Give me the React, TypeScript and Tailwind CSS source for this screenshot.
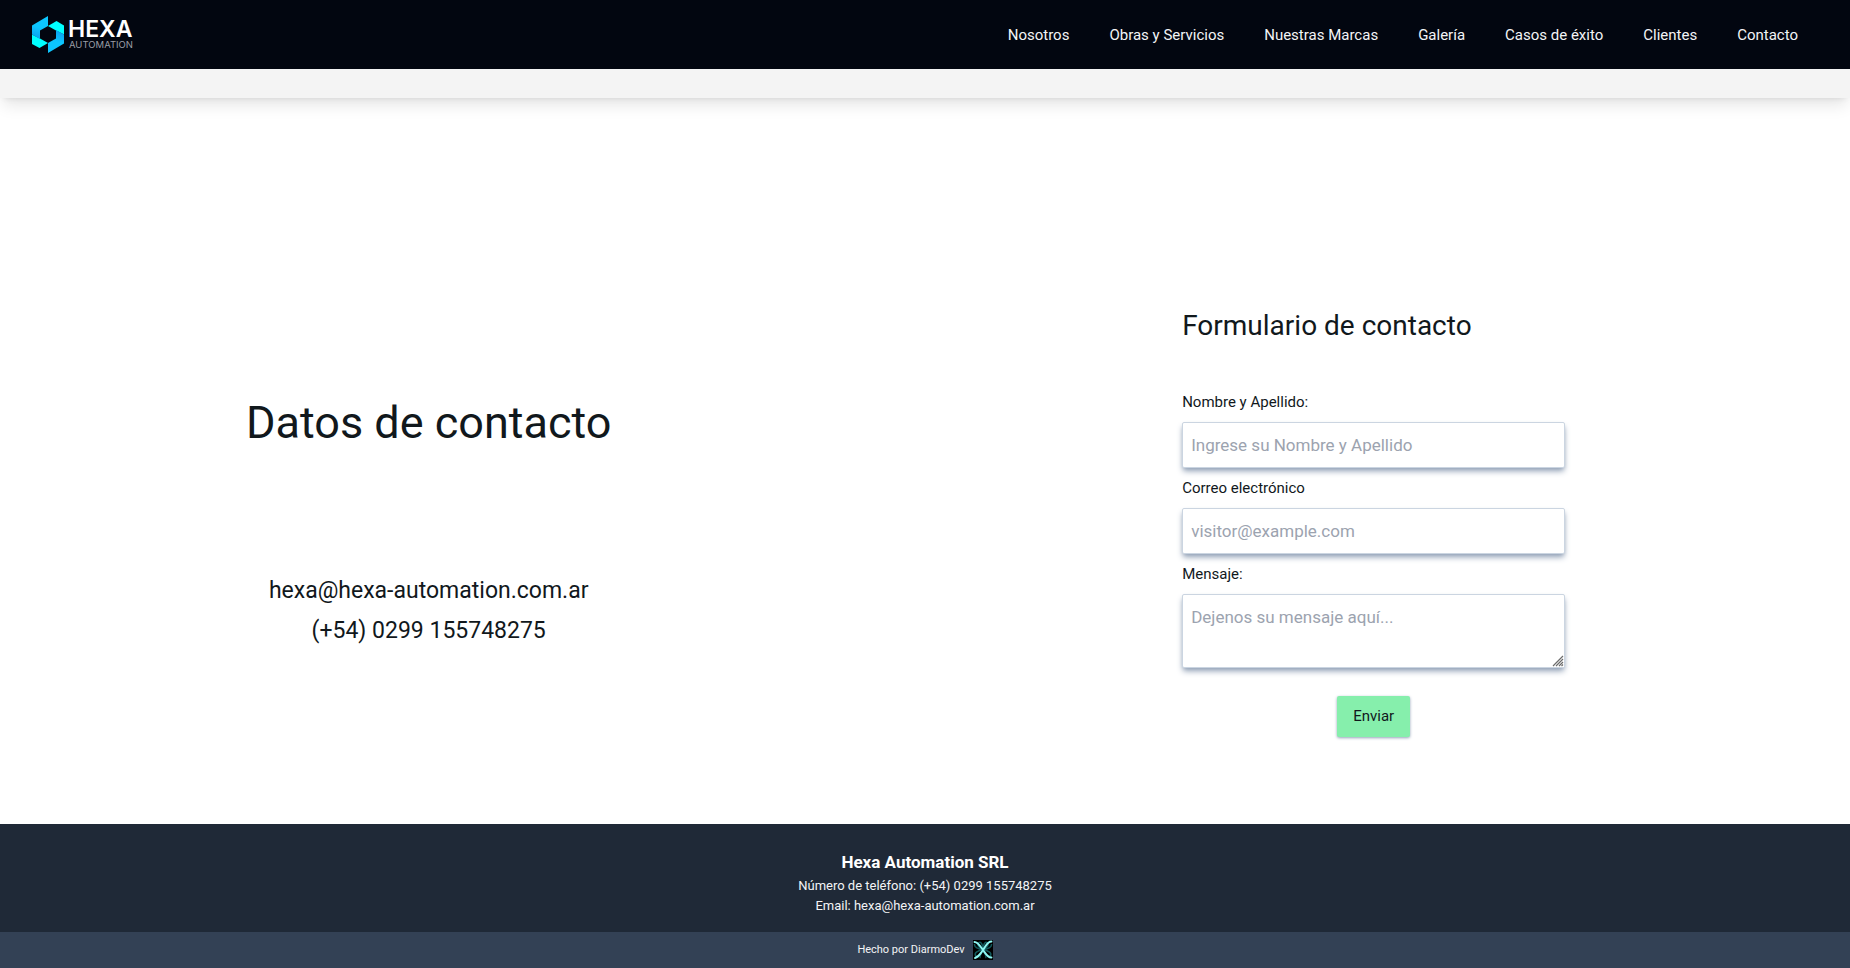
import React from "react";

const links = [
  "Nosotros",
  "Obras y Servicios",
  "Nuestras Marcas",
  "Galería",
  "Casos de éxito",
  "Clientes",
  "Contacto",
];

const labelClass = "block py-2 text-[15px] leading-6";

const fieldClass =
  "block w-full rounded-xs border border-[#cbd5e1] bg-white p-2 text-[17px] leading-7 text-[#11181c] shadow-[0_4px_6px_-1px_#94a3b8,0_2px_4px_-2px_#94a3b8] placeholder:text-[#9ca3af] focus:outline-none";

function Logo() {
  return (
    <a href="#inicio" aria-label="Hexa Automation" className="flex items-center gap-1">
      <svg width="32" height="37" viewBox="0 0 32 37" aria-hidden="true">
        <defs>
          <linearGradient id="fold-a" x1="0.6" y1="0" x2="0.4" y2="1">
            <stop offset="0.5" stopColor="#0cc6ff" />
            <stop offset="1" stopColor="#0a9ff0" />
          </linearGradient>
          <linearGradient id="fold-b" x1="0.4" y1="1" x2="0.6" y2="0">
            <stop offset="0.5" stopColor="#0cc6ff" />
            <stop offset="1" stopColor="#0a9ff0" />
          </linearGradient>
        </defs>
        <path d="M0 18.500V28l7.500 4L16 27l-8-4.500z" fill="#0ff" />
        <path d="M32 18.500V9.500L24.500 5 16 10l8 4.500z" fill="#0ff" />
        <path d="M16 0 0 9.500v9L8 23v-8.500l8-4.500z" fill="url(#fold-a)" />
        <path d="M16 37l16-9.500v-9L24 14v8.500L16 27z" fill="url(#fold-b)" />
      </svg>
      <svg width="68" height="37" viewBox="0 0 68 37" aria-hidden="true">
        <text x="0" y="21" fontFamily="Inter, sans-serif" fontSize="23" fontWeight="600" fill="#fff">
          HEXA
        </text>
        <text x="1" y="32" fontFamily="Inter, sans-serif" fontSize="9.5" fontWeight="400" fill="#9a9da6">
          AUTOMATION
        </text>
      </svg>
    </a>
  );
}

function DevMark() {
  return (
    <svg width="20" height="20" viewBox="0 0 20 20" aria-hidden="true">
      <rect width="20" height="20" fill="#000" />
      <g fill="none" stroke="#12595c" strokeWidth="1.500">
        <path d="M10 10C5 8 4 4 6 2.500S10 5 10 10" />
        <path d="M10 10c0-5 2-9 4-7.500S15 8 10 10" />
        <path d="M10 10C5 9 1 7 1.500 4" />
        <path d="M10 10c-5 0-9 3-7.500 5.500S8 15 10 10" />
        <path d="M10 10c5 0 9 3 7.500 5.500S12 15 10 10" />
        <path d="M10 10c5-1 9-3 8.500-6" />
        <path d="M10 10c-2 4-4 7-2.500 8M10 10c2 4 4 7 2.500 8" />
      </g>
      <g fill="none" stroke="#8ff7f2" strokeWidth="1.900" strokeLinecap="round">
        <path d="M1.500 2C5 2 7 6 10 10s5 8 8.500 7.500" />
        <path d="M18.500 1.500C14 1.500 13 6 10 10s-4 7-8 8" />
      </g>
    </svg>
  );
}

function ResizeGrip() {
  return (
    <svg
      className="pointer-events-none absolute right-px bottom-px"
      width="12"
      height="12"
      viewBox="0 0 12 12"
      aria-hidden="true"
    >
      <rect width="12" height="12" fill="#fff" />
      <path
        d="M1 11 11 1M4 11l7-7M7 11l4-4M9.500 11l1.500-1.500"
        stroke="#6b6b6b"
        strokeWidth="1.200"
      />
    </svg>
  );
}

export default function App() {
  return (
    <div className="flex min-h-screen flex-col bg-white font-['Roboto',sans-serif] text-[#11181c]">
      <header className="bg-[#f4f4f4] pb-[29px] shadow-lg">
        <nav className="flex h-[69px] items-center justify-between bg-[#020610] px-8">
          <Logo />
          <ul className="flex text-[15px] leading-6 text-gray-100">
            {links.map((label) => (
              <li key={label}>
                <a href="#" className="block px-5 py-2">
                  {label}
                </a>
              </li>
            ))}
          </ul>
        </nav>
      </header>

      <main className="grid flex-1 grid-cols-[9fr_10fr] gap-10">
        <section className="flex flex-col items-center pt-[301px] text-center">
          <h1 className="text-[45px] leading-12">Datos de contacto</h1>
          <div className="mt-[124px] text-[23px] leading-10">
            <p>hexa@hexa-automation.com.ar</p>
            <p>(+54) 0299 155748275</p>
          </div>
        </section>

        <section className="flex flex-col items-center pt-[208px]">
          <form className="w-[383px]" onSubmit={(e) => e.preventDefault()}>
            <h2 className="mb-9 text-[28px] leading-10">Formulario de contacto</h2>
            <label htmlFor="nombre" className={labelClass}>
              Nombre y Apellido:
            </label>
            <input id="nombre" type="text" placeholder="Ingrese su Nombre y Apellido" className={fieldClass} />
            <label htmlFor="correo" className={labelClass}>
              Correo electrónico
            </label>
            <input id="correo" type="email" placeholder="visitor@example.com" className={fieldClass} />
            <label htmlFor="mensaje" className={labelClass}>
              Mensaje:
            </label>
            <div className="relative">
              <textarea
                id="mensaje"
                placeholder="Dejenos su mensaje aquí..."
                className={`${fieldClass} h-[74px] resize-y`}
              />
              <ResizeGrip />
            </div>
            <div className="mt-7 flex justify-center">
              <button
                type="submit"
                className="rounded-xs bg-[#86efac] px-4 py-2 text-[15px] leading-[25px] shadow-[0_1px_3px_0_#94a3b8]"
              >
                Enviar
              </button>
            </div>
          </form>
        </section>
      </main>

      <footer className="text-center text-gray-100">
        <div className="bg-[#1f2937] pt-6 pb-4">
          <p className="text-[17px] leading-7 font-bold text-white">Hexa Automation SRL</p>
          <p className="text-[13px] leading-5">Número de teléfono: (+54) 0299 155748275</p>
          <p className="text-[13px] leading-5">Email: hexa@hexa-automation.com.ar</p>
        </div>
        <div className="flex h-9 items-center justify-center gap-2 bg-[#334155] text-[11px]">
          <span>Hecho por DiarmoDev</span>
          <DevMark />
        </div>
      </footer>
    </div>
  );
}
